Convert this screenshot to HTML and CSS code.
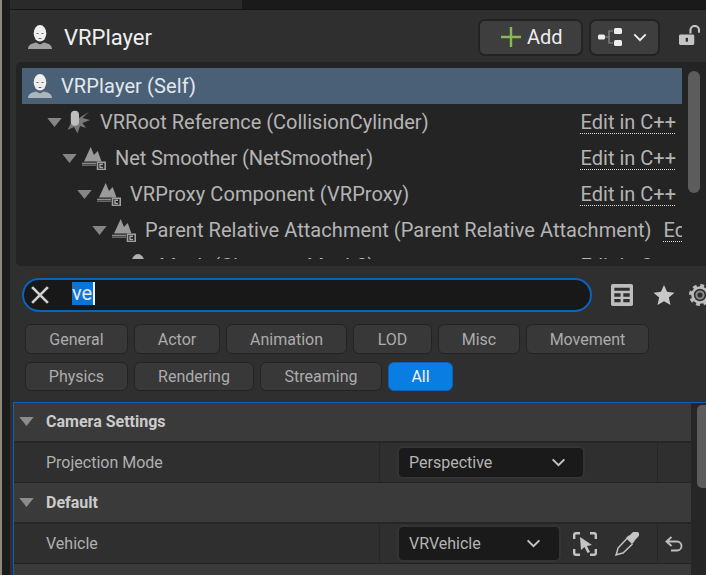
FILE: index.html
```html
<!DOCTYPE html>
<html lang="en">
<head>
<meta charset="utf-8">
<title>VRPlayer</title>
<link rel="stylesheet" href="styles.css">
</head>
<body>
<svg class="defs" width="0" height="0" aria-hidden="true">
  <defs>
    <symbol id="person" viewBox="0 0 24 24">
      <path fill="currentColor" opacity=".6" d="M0 24c0-3.500 3-5.500 8-6.500l4 2 4-2c5 1 8 3 8 6.500z"/>
      <ellipse cx="12" cy="8.300" rx="6.300" ry="8.300" fill="currentColor"/>
      <path fill="#666" d="M8.500 8h2v1h-2zM13.500 8h2v1h-2zM10.500 13h3v1h-3z"/>
    </symbol>
    <symbol id="comp" viewBox="0 0 24 24">
      <path fill="#9a9a9a" d="M2 15.500 8.700 1l3.300 8 3.700-4 3.800 10.500z"/>
      <path fill="#8c8c8c" d="M0 16.700h14V18H0z"/>
      <path fill="#666" d="M0 18.400h14V20H0z"/>
      <path fill="#242424" stroke="#a0a0a0" stroke-width="1.600" d="M15.500 16.200h7.700v7.300h-7.700z"/>
      <path fill="none" stroke="#a8a8a8" stroke-width="1.400" d="M21 18.300h-3v3.200h3"/>
    </symbol>
    <symbol id="root" viewBox="0 0 24 24">
      <path fill="#777" d="M12 8 22 1.700 15.500 8l7.500 2-7.500 3 3.500 5-6-2-2.500 7.500L7 17l-6.500 3L4 13z"/>
      <rect x="3.800" y=".7" width="8.200" height="15" rx="4" fill="#bdbdbd"/>
    </symbol>
    <symbol id="caret" viewBox="0 0 16 10">
      <path fill="currentColor" d="M0 0h16L8 10z"/>
    </symbol>
    <symbol id="chev" viewBox="0 0 16 10">
      <path fill="none" stroke="currentColor" stroke-width="2.200" d="M1.500 1.500 8 8l6.500-6.500"/>
    </symbol>
  </defs>
</svg>

<div class="app">
  <div class="desk"></div>
  <div class="gutter"></div>
  <main class="main">
    <div class="tabstrip"><div class="tab"></div></div>

    <div class="panel">
      <header class="titlebar">
        <svg class="title-icon"><use href="#person"/></svg>
        <span class="title">VRPlayer</span>
        <button class="tool add">
          <svg class="plus" viewBox="0 0 20 20"><path fill="none" stroke="#8ab854" stroke-width="2.400" d="M10 0v20M0 10h20"/></svg>
          <span>Add</span>
        </button>
        <button class="tool hier">
          <svg class="hier-icon" viewBox="0 0 24 18">
            <path fill="none" stroke="#8d8d8d" stroke-width="1.200" d="M7 9h4M15 3h-4v12h4"/>
            <rect x="0" y="6.500" width="7" height="5" rx="1.500" fill="#eee"/>
            <rect x="16" y="0" width="8" height="6" rx="1.500" fill="#eee"/>
            <rect x="16" y="12" width="8" height="6" rx="1.500" fill="#eee"/>
          </svg>
          <svg class="hier-chev"><use href="#chev"/></svg>
        </button>
        <svg class="lock" viewBox="0 0 22 22">
          <path fill="none" stroke="#c4c4c4" stroke-width="2.200" d="M12 9V5.500a4.500 4.500 0 0 1 9 0V8"/>
          <rect x="0" y="10" width="16" height="11" rx="1.500" fill="#c4c4c4"/>
          <rect x="7" y="13.500" width="2.400" height="4" fill="#2f2f2f"/>
        </svg>
      </header>

      <section class="tree">
        <div class="tree-rows">
          <div class="row selected">
            <svg class="row-icon person-sm"><use href="#person"/></svg>
            <span class="name name-self">VRPlayer (Self)</span>
          </div>
          <div class="row depth1">
            <svg class="caret"><use href="#caret"/></svg>
            <svg class="row-icon"><use href="#root"/></svg>
            <span class="name">VRRoot Reference (CollisionCylinder)</span>
            <a class="edit">Edit in C++</a>
          </div>
          <div class="row depth2">
            <svg class="caret"><use href="#caret"/></svg>
            <svg class="row-icon"><use href="#comp"/></svg>
            <span class="name tight">Net Smoother (NetSmoother)</span>
            <a class="edit">Edit in C++</a>
          </div>
          <div class="row depth3">
            <svg class="caret"><use href="#caret"/></svg>
            <svg class="row-icon"><use href="#comp"/></svg>
            <span class="name loose">VRProxy Component (VRProxy)</span>
            <a class="edit">Edit in C++</a>
          </div>
          <div class="row depth4">
            <svg class="caret"><use href="#caret"/></svg>
            <svg class="row-icon"><use href="#comp"/></svg>
            <span class="name wide">Parent Relative Attachment (Parent Relative Attachment)</span>
            <a class="edit">Edit in C++</a>
          </div>
          <div class="row depth5">
            <svg class="row-icon skull"><use href="#person"/></svg>
            <span class="name">Mesh (CharacterMesh0)</span>
            <a class="edit">Edit in C++</a>
          </div>
        </div>
        <div class="tree-scroll"><div class="tree-thumb"></div></div>
      </section>

      <div class="searchbar">
        <div class="search">
          <svg class="clear" viewBox="0 0 16 16"><path fill="none" stroke="#cfcfcf" stroke-width="2.400" d="M1 1l14 14M15 1 1 15"/></svg>
          <span class="query"><span class="sel">ve</span></span>
        </div>
        <svg class="grid-icon" viewBox="0 0 22 22">
          <rect width="22" height="22" rx="1.800" fill="#bdbdbd"/>
          <path fill="#2f2f2f" d="M3.300 3.700h15.400v3H3.300zM3.300 9.300h6.300v3.400H3.300zM12.300 9.300h6.400v3.400h-6.400zM3.300 15h6.300v3.300H3.300zM12.300 15h6.400v3.300h-6.400z"/>
        </svg>
        <svg class="star-icon" viewBox="0 0 22 22"><path fill="#c8c8c8" d="m11 0 3.200 7.200 7.800.8-5.900 5.200 1.700 7.800L11 17l-6.800 4 1.700-7.800L0 8l7.800-.8z"/></svg>
        <svg class="gear-icon" viewBox="0 0 22 22">
          <circle cx="11" cy="11" r="7.500" fill="none" stroke="#bdbdbd" stroke-width="2.600"/>
          <circle cx="11" cy="11" r="9" fill="none" stroke="#bdbdbd" stroke-width="4" stroke-dasharray="3.600 3.470"/>
          <circle cx="11" cy="11" r="3.600" fill="none" stroke="#8a8a8a" stroke-width="2"/>
        </svg>
      </div>

      <div class="filters">
        <div class="chips">
          <span class="chip w-general">General</span>
          <span class="chip w-actor">Actor</span>
          <span class="chip w-anim">Animation</span>
          <span class="chip w-lod">LOD</span>
          <span class="chip w-misc">Misc</span>
          <span class="chip w-move">Movement</span>
        </div>
        <div class="chips chips-low">
          <span class="chip w-general">Physics</span>
          <span class="chip w-render">Rendering</span>
          <span class="chip w-stream">Streaming</span>
          <span class="chip w-all active">All</span>
        </div>
      </div>

      <section class="details">
        <div class="props">
          <div class="cat cat-first">
            <svg class="cat-caret"><use href="#caret"/></svg>
            <span>Camera Settings</span>
          </div>
          <div class="prop">
            <div class="prop-name">Projection Mode</div>
            <div class="prop-value">
              <div class="combo w-persp"><span>Perspective</span><svg class="combo-chev"><use href="#chev"/></svg></div>
            </div>
            <div class="prop-reset"></div>
          </div>
          <div class="cat cat-second">
            <svg class="cat-caret"><use href="#caret"/></svg>
            <span>Default</span>
          </div>
          <div class="prop">
            <div class="prop-name">Vehicle</div>
            <div class="prop-value">
              <div class="combo w-veh"><span>VRVehicle</span><svg class="combo-chev"><use href="#chev"/></svg></div>
              <svg class="pick" viewBox="0 0 24 24">
                <path fill="none" stroke="#c4c4c4" stroke-width="2.400" d="M1.200 7V3a1.800 1.800 0 0 1 1.800-1.800h4M17 1.200h4A1.800 1.800 0 0 1 22.800 3v4M22.800 17v4a1.800 1.800 0 0 1-1.800 1.800h-4M7 22.800H3A1.800 1.800 0 0 1 1.200 21v-4"/>
                <path fill="#c4c4c4" d="m7 5 12 8-5 1 3 6-2.500 1-3-6L8 18z"/>
              </svg>
              <svg class="dropper" viewBox="0 0 24 24">
                <path fill="none" stroke="#c4c4c4" stroke-width="1.500" d="M12 6.500 3 16l-1 4-1 3 3-1 4-1 9.500-9"/>
                <path fill="#c4c4c4" d="m11 6 2-2 2-1 3-3a3.500 3.500 0 0 1 5 5l-3 3-1 2-2 2z"/>
              </svg>
            </div>
            <div class="prop-reset">
              <svg class="reset" viewBox="0 0 18 16"><path fill="none" stroke="#bdbdbd" stroke-width="1.900" d="M6.500 1 1.500 5.500l5 4.500M1.500 5.500H12a4.500 4.500 0 0 1 0 9H6"/></svg>
            </div>
          </div>
          <div class="cat"></div>
        </div>
        <div class="details-scroll"><div class="details-thumb"></div></div>
      </section>
    </div>
  </main>
</div>
</body>
</html>
```
FILE: styles.css
```css
* { box-sizing: border-box; }
html, body { margin: 0; padding: 0; height: 100%; overflow: hidden; }
body { background: #1b1b1b; font-family: Roboto, "Liberation Sans", sans-serif; color: #c0c0c0; }
.defs { display: block; height: 0; }
svg { display: block; flex: none; }

.app { display: flex; width: 706px; height: 575px; overflow: hidden; }
.desk { width: 2px; background: #8d897b; flex: none; }
.gutter { width: 8px; background: #1c1c1c; flex: none; }
.main { flex: none; width: 696px; display: flex; flex-direction: column; }

.tabstrip { height: 10px; background: #1a1a1a; border-bottom: 1px solid #161616; flex: none; }
.tab { width: 232px; height: 9px; background: #2a2a2a; }

.panel { flex: 1; background: #2f2f2f; overflow: hidden; }

/* title bar */
.titlebar { display: flex; align-items: center; height: 52px; padding: 2px 0 0 18px; }
.title-icon { width: 24px; height: 24px; color: #efefef; }
.title { font-size: 22px; color: #efefef; margin-left: 12px; margin-right: auto; }
.tool { display: flex; align-items: center; height: 37px; background: #3e3e3e; border: 2px solid #232323; border-radius: 7px; padding: 0; color: #ececec; font: 20px Roboto, sans-serif; }
.add { width: 105px; padding-left: 21px; }
.plus { width: 20px; height: 20px; margin-right: 6px; }
.hier { width: 71px; margin-left: 6px; padding-left: 7px; }
.hier-icon { width: 24px; height: 18px; }
.hier-chev { width: 14px; height: 9px; margin-left: 11px; color: #efefef; }
.lock { width: 21px; height: 21px; margin-left: 19px; margin-right: 6px; margin-top: -3px; }

/* tree */
.tree { display: flex; height: 204px; margin-left: 6px; background: #242424; border-radius: 5px 0 0 5px; padding: 6px 0 7px 6px; }
.tree-rows { width: 660px; height: 191px; overflow: hidden; flex: none; }
.row { display: flex; align-items: center; height: 36px; white-space: nowrap; overflow: hidden; padding-right: 6px; }
.selected { background: #4a6076; color: #e6e6e6; padding-left: 6px; }
.person-sm { color: #eeeeee; }
.name { font-size: 20px; color: #b4b4b4; flex: none; }
.name-self { color: #e2e8ee; letter-spacing: .13px; }
.wide { letter-spacing: .055px; }
.tight { letter-spacing: -.11px; }
.loose { letter-spacing: .07px; }
.depth1 { padding-left: 25px; }
.depth2 { padding-left: 40px; }
.depth3 { padding-left: 55px; }
.depth4 { padding-left: 70px; }
.depth5 { padding-left: 104px; }
.caret { width: 15px; height: 9px; color: #858585; margin-right: 5px; }
.row-icon { width: 24px; height: 24px; margin-right: 9px; }
.skull { color: #b0b0b0; }
.edit { margin-left: auto; padding-left: 12px; font-size: 20px; color: #b4b4b4; flex: none; }
.edit { text-decoration: underline dotted #dddddd 1px; text-underline-offset: 4px; }
.tree-scroll { width: 18px; padding: 3px 0 0 6px; flex: none; }
.tree-thumb { width: 12px; height: 122px; background: #5c5c5c; border-radius: 6px; }

/* search */
.searchbar { display: flex; align-items: center; height: 34px; margin-top: 12px; padding-left: 12px; }
.search { display: flex; flex: none; align-items: center; width: 570px; height: 34px; background: #181818; border: 2px solid #0a63b8; border-radius: 17px; padding-left: 7px; }
.clear { width: 18px; height: 18px; }
.query { margin-left: 23px; margin-top: -3px; font-size: 20px; color: #e8e8e8; border-right: 2px solid #f2f2f2; height: 23px; display: block; }
.sel { background: #0a74d8; display: block; height: 23px; line-height: 23px; padding-right: 1px; }
.grid-icon { width: 22px; height: 22px; margin-left: 19px; }
.star-icon { width: 22px; height: 21px; margin-left: 20px; }
.gear-icon { width: 22px; height: 22px; margin-left: 14px; }

/* filter chips */
.filters { display: flex; flex-direction: column; gap: 8px; padding: 12px 0 0 15px; }
.chips { display: flex; gap: 6px; }
.chip { display: flex; justify-content: center; align-items: center; height: 30px; background: #383838; border: 1px solid #232323; border-radius: 6px; font-size: 16px; color: #acacac; }
.chips-low .chip { height: 29px; }
.w-general { width: 103px; }
.w-actor { width: 86px; }
.w-anim { width: 121px; }
.w-lod { width: 79px; }
.w-misc { width: 82px; }
.w-move { width: 123px; }
.w-render { width: 120px; }
.w-stream { width: 122px; }
.w-all { width: 65px; }
.active { background: #0a7de3; color: #f2f2f2; border-color: #0a63b8; }

/* details */
.details { display: flex; margin: 11px 0 0 3px; border-top: 1px solid #0a63b8; border-left: 1px solid #0a63b8; height: 180px; }
.props { width: 677px; flex: none; }
.cat { display: flex; align-items: center; height: 40px; background: #3a3a3a; border-bottom: 2px solid #262626; padding: 0 0 0 5px; font-size: 16px; font-weight: 700; color: #cbcbcb; }
.cat-first { padding-bottom: 2px; }
.cat-second { height: 41px; }
.cat-caret { width: 15px; height: 9px; color: #8c8c8c; margin-right: 12px; }
.prop { display: flex; height: 40px; background: #2f2f2f; border-bottom: 1px solid #232323; }
.prop-name { width: 366px; padding-left: 32px; display: flex; align-items: center; font-size: 16px; color: #b0b0b0; border-right: 1px solid #262626; flex: none; }
.prop-value { width: 278px; display: flex; align-items: center; padding-left: 17px; border-right: 1px solid #262626; flex: none; }
.prop-reset { flex: 1; display: flex; align-items: center; justify-content: center; padding-right: 2px; }
.combo { display: flex; align-items: center; justify-content: space-between; height: 33px; background: #1a1a1a; border: 2px solid #343434; border-radius: 6px; font-size: 16px; color: #b4b4b4; padding: 0 17px 0 10px; }
.w-persp { width: 188px; }
.w-veh { width: 164px; height: 37px; padding-right: 18px; }
.combo-chev { width: 15px; height: 9px; color: #c4c4c4; }
.pick { width: 24px; height: 24px; margin-left: 12px; }
.dropper { width: 24px; height: 24px; margin-left: 18px; }
.reset { width: 18px; height: 16px; }
.details-scroll { flex: 1; background: #262626; padding: 2px 0 0 6px; }
.details-thumb { height: 83px; background: #5c5c5c; border-radius: 5px 0 0 5px; }
```
